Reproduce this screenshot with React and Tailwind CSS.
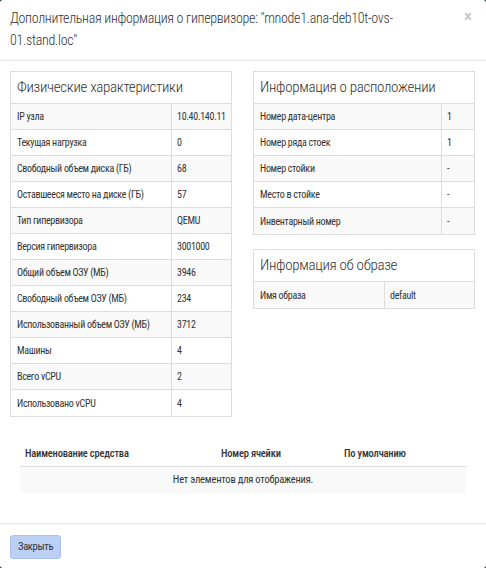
const physical = [
  ["IP узла", "10.40.140.11"],
  ["Текущая нагрузка", "0"],
  ["Свободный объем диска (ГБ)", "68"],
  ["Оставшееся место на диске (ГБ)", "57"],
  ["Тип гипервизора", "QEMU"],
  ["Версия гипервизора", "3001000"],
  ["Общий объем ОЗУ (МБ)", "3946"],
  ["Свободный объем ОЗУ (МБ)", "234"],
  ["Использованный объем ОЗУ (МБ)", "3712"],
  ["Машины", "4"],
  ["Всего vCPU", "2"],
  ["Использовано vCPU", "4"],
];

const location = [
  ["Номер дата-центра", "1"],
  ["Номер ряда стоек", "1"],
  ["Номер стойки", "-"],
  ["Место в стойке", "-"],
  ["Инвентарный номер", "-"],
];

const font = { fontFamily: '"Roboto Condensed", "Ubuntu Condensed", "DejaVu Sans Condensed", "Liberation Sans", sans-serif' };

const InfoTable = ({ title, rows, labelW }) => (
  <div className="border border-[#dddddd] text-[#333333]">
    <div className="h-[32px] px-[6px] flex items-center text-[15px] font-light tracking-[-0.3px] whitespace-nowrap border-b border-[#dddddd]">
      {title}
    </div>
    {rows.map(([label, value], i) => (
      <div
        key={label}
        className={
          "flex h-[26px] text-[10px] tracking-[-0.3px] whitespace-nowrap " +
          (i % 2 === 0 ? "bg-[#f9f9f9] " : "bg-white ") +
          (i < rows.length - 1 ? "border-b border-[#dddddd]" : "")
        }
      >
        <div className={labelW + " px-[6px] flex items-center border-r border-[#dddddd] shrink-0"}>
          {label}
        </div>
        <div className="flex-1 px-[5px] flex items-center">{value}</div>
      </div>
    ))}
  </div>
);

export default function App() {
  return (
    <div className="w-[486px] h-[568px] bg-[#1d3b2c]" style={font}>
      <div className="w-full h-full bg-white rounded-[3px] flex flex-col">
        {/* header */}
        <div className="h-[61px] border-b border-[#e5e5e5] flex justify-between px-[10px] pt-[7px]">
          <h4 className="w-[440px] text-[14px] font-light tracking-[-0.3px] leading-[22px] text-[#333333]">
            Дополнительная информация о гипервизоре: "mnode1.ana-deb10t-ovs-01.stand.loc"
          </h4>
          <button className="text-[#c8c8c8] text-[17px] font-bold leading-none h-[18px] mr-[4px]">
            ×
          </button>
        </div>

        {/* body */}
        <div className="flex-1 px-[10px] pt-[10px]">
          <div className="flex gap-[21px]">
            <div className="w-[222px]">
              <InfoTable title="Физические характеристики" rows={physical} labelW="w-[161px]" />
            </div>
            <div className="w-[222px] flex flex-col gap-[14px]">
              <InfoTable title="Информация о расположении" rows={location} labelW="w-[188px]" />
              <InfoTable title="Информация об образе" rows={[["Имя образа", "default"]]} labelW="w-[131px]" />
            </div>
          </div>

          <div className="mx-[10px] mt-[25px] text-[10.5px] tracking-[-0.2px] text-[#333333]">
            <div className="flex h-[25px] items-center border-b border-[#dddddd] font-medium">
              <div className="w-[200px] px-[5px]">Наименование средства</div>
              <div className="w-[124px] px-[1px]">Номер ячейки</div>
              <div className="flex-1">По умолчанию</div>
            </div>
            <div className="h-[26px] bg-[#f9f9f9] flex items-center justify-center">
              Нет элементов для отображения.
            </div>
          </div>
        </div>

        {/* footer */}
        <div className="h-[45px] border-t border-[#e5e5e5] px-[10px] pt-[9px]">
          <button className="h-[24px] px-[7px] rounded-[3px] bg-[#bcd0f5] border border-[#a9c1ee] text-[10.5px] tracking-[-0.3px] text-[#333333]">
            Закрыть
          </button>
        </div>
      </div>
    </div>
  );
}
